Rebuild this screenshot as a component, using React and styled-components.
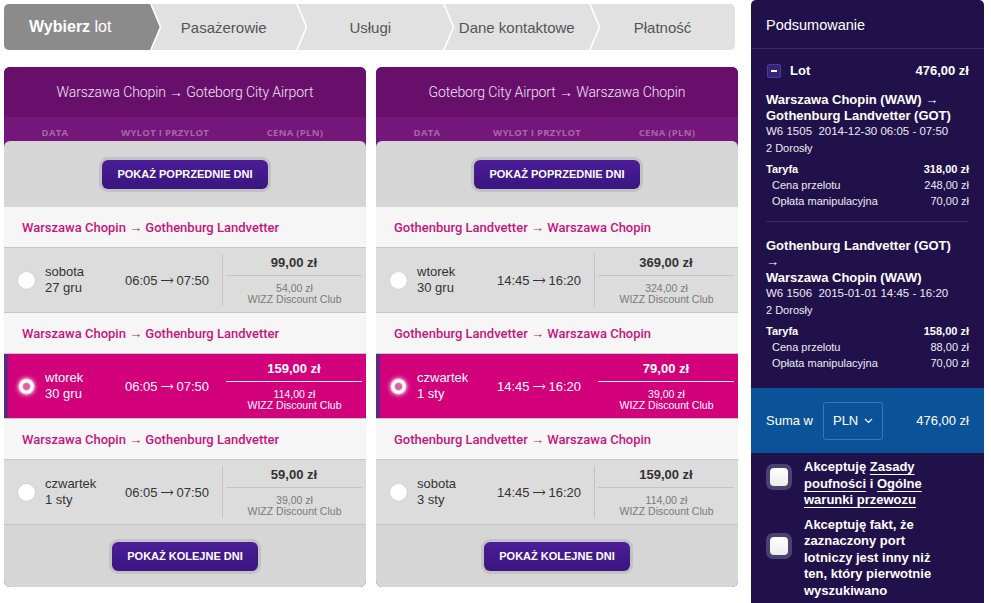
import React from "react"
import styled, { createGlobalStyle } from "styled-components"


const GlobalStyle = createGlobalStyle`
  html, body {
    margin: 0;
    padding: 0;
    background: #fff;
  }
  body {
    font-family: "Liberation Sans", Arial, sans-serif;
    color: #333;
  }
  * {
    box-sizing: border-box;
  }
`

const outbound = {
  title: "Warszawa Chopin → Goteborg City Airport",
  route: "Warszawa Chopin → Gothenburg Landvetter",
  from: "06:05",
  to: "07:50",
  days: [
    { day: "sobota", date: "27 gru", price: "99,00 zł", club: "54,00 zł" },
    { day: "wtorek", date: "30 gru", price: "159,00 zł", club: "114,00 zł", selected: true },
    { day: "czwartek", date: "1 sty", price: "59,00 zł", club: "39,00 zł" },
  ],
}

const inbound = {
  title: "Goteborg City Airport → Warszawa Chopin",
  route: "Gothenburg Landvetter → Warszawa Chopin",
  from: "14:45",
  to: "16:20",
  days: [
    { day: "wtorek", date: "30 gru", price: "369,00 zł", club: "324,00 zł" },
    { day: "czwartek", date: "1 sty", price: "79,00 zł", club: "39,00 zł", selected: true },
    { day: "sobota", date: "3 sty", price: "159,00 zł", club: "114,00 zł" },
  ],
}

const summary = [
  {
    lines: ["Warszawa Chopin (WAW) →", "Gothenburg Landvetter (GOT)"],
    meta: "W6 1505\u00a0 2014-12-30 06:05 - 07:50",
    fare: "318,00 zł",
    base: "248,00 zł",
    fee: "70,00 zł",
  },
  {
    lines: ["Gothenburg Landvetter (GOT)", "→", "Warszawa Chopin (WAW)"],
    meta: "W6 1506\u00a0 2015-01-01 14:45 - 16:20",
    fare: "158,00 zł",
    base: "88,00 zł",
    fee: "70,00 zł",
  },
]


const Page = styled.div`
  display: flex;
  align-items: flex-start;
  height: 603px;
  overflow: hidden;
`

const Main = styled.main`
  width: 738px;
  flex-shrink: 0;
  padding: 4px 0 0 4px;
`

/* ---------- booking steps ---------- */

const Steps = styled.ol`
  display: flex;
  width: 731px;
  height: 46px;
  margin: 0 0 17px;
  padding: 0;
  list-style: none;
  background: #e1e1e1;
  border-radius: 5px;
  overflow: hidden;
`

const Step = styled.li`
  position: relative;
  flex: ${props => props.last ? "1" : "0 0 146.5px"};
  display: flex;
  align-items: center;
  justify-content: center;
  padding-right: ${props => props.active ? "14px" : "0"};
  font-size: ${props => props.active ? "16px" : "15px"};
  color: ${props => props.active ? "#fff" : "#555"};
  background: ${props => props.active ? "#8b8b8b" : "transparent"};

  b {
    font-weight: bold;
  }
`

const ChevronMark = styled.svg`
  position: absolute;
  top: 0;
  right: -11px;
  z-index: 1;
`

const Chevron = ({ fill }) => (
  <ChevronMark width="12" height="46" viewBox="0 0 12 46">
    {fill && <polygon points="0,0 10.5,23 0,46" fill={fill} />}
    <polyline points="0.5,-1 10.5,23 0.5,47" fill="none" stroke="#fff" strokeWidth="1.6" />
  </ChevronMark>
)

/* ---------- flight panels ---------- */

const Panels = styled.div`
  display: flex;
  gap: 10px;
`

const Panel = styled.section`
  width: 362px;
  height: 520px;
  display: flex;
  flex-direction: column;
  background: #74167a;
  border-radius: 6px;
  overflow: hidden;
`

const PanelTitle = styled.h2`
  margin: 0;
  height: 50px;
  display: flex;
  align-items: center;
  justify-content: center;
  background: #680f6c;
  color: #f3e3f3;
  font: 300 14px Roboto, "Open Sans", sans-serif;
  letter-spacing: -0.1px;
`

const ColumnHeads = styled.div`
  display: flex;
  height: 24px;
  padding-top: 9px;
`

const ColumnHead = styled.span`
  width: ${props => props.width}px;
  flex-shrink: 0;
  text-align: center;
  color: #a966ab;
  font: bold 9.5px "Open Sans", "Liberation Sans", sans-serif;
  letter-spacing: 0.3px;
`

const PanelBody = styled.div`
  flex: 1;
  display: flex;
  flex-direction: column;
  background: #d6d6d6;
  border-radius: 6px 6px 0 0;
`

const MoreBar = styled.div`
  height: ${props => props.height}px;
  display: flex;
  align-items: center;
  justify-content: center;
`

const MoreButton = styled.button`
  height: 29px;
  padding: 0 15px;
  border: 0;
  border-radius: 6px;
  background: linear-gradient(#4b1d97, #3a1580);
  box-shadow: 0 0 0 3px #c2c2c2;
  color: #fff;
  font: bold 11px "Liberation Sans", Arial, sans-serif;
  cursor: pointer;
`

const RouteLabel = styled.div`
  height: 40px;
  display: flex;
  align-items: center;
  padding-left: 18px;
  background: #f6f6f6;
  color: #c8137d;
  font: 500 13px Roboto, "Open Sans", sans-serif;
`

const FlightRow = styled.div`
  height: 66px;
  display: flex;
  align-items: center;
  padding-left: 14px;
  background: ${props => props.selected ? "#d3007b" : "#dcdcdc"};
  border-top: 1px solid #c6c6c6;
  border-bottom: 1px solid #c6c6c6;
  box-shadow: ${props => props.selected ? "inset 4px 0 0 #5b2b83" : "none"};
  color: ${props => props.selected ? "#fff" : "#333"};
  font-size: 13px;
`

const Radio = styled.span`
  width: 17px;
  height: 17px;
  flex-shrink: 0;
  margin-right: 10px;
  border-radius: 50%;
  background: ${props => props.checked
    ? "radial-gradient(circle, #d964a4 0 3px, #fff 4.5px 6.5px, rgba(255,255,255,0.5) 8.5px, rgba(255,255,255,0) 9px)"
    : "radial-gradient(circle at 50% 45%, #fff 55%, #ededed 100%)"};
  box-shadow: ${props => props.checked ? "0 0 4px rgba(255,255,255,0.8)" : "0 0 1px rgba(0,0,0,0.25)"};
`

const DayCell = styled.div`
  width: 80px;
  flex-shrink: 0;
  line-height: 16px;
`

const TimeCell = styled.div`
  width: 97px;
  flex-shrink: 0;
  display: flex;
  align-items: center;
  gap: 3px;
  white-space: nowrap;
`

const TimeArrow = styled.svg`
  flex-shrink: 0;
  margin-top: 1px;
`

const PriceCell = styled.div`
  flex: 1;
  align-self: stretch;
  margin: 6px 0;
  border-left: 1px solid ${props => props.selected ? "transparent" : "#c4c4c4"};
  text-align: center;
`

const PriceMain = styled.div`
  height: 22px;
  margin: 0 4px 0 3px;
  line-height: 18px;
  font-weight: bold;
  border-bottom: 1px solid ${props => props.selected ? "#fff" : "#c4c4c4"};
`

const PriceClub = styled.div`
  padding-top: 7px;
  font-size: 10.5px;
  line-height: 11px;
  color: ${props => props.selected ? "#fff" : "#7a7a7a"};
`

/* ---------- summary sidebar ---------- */

const Sidebar = styled.aside`
  width: 233px;
  height: 603px;
  flex-shrink: 0;
  margin-left: 13px;
  background: #20114a;
  border-radius: 5px 5px 0 0;
  color: #fff;
`

const SummaryTitle = styled.h3`
  margin: 0;
  height: 49px;
  padding: 1px 15px 0;
  display: flex;
  align-items: center;
  border-bottom: 1px solid #382b62;
  font-size: 14.5px;
  font-weight: normal;
`

const SummaryBody = styled.div`
  padding: 0 15px;
`

const LineItem = styled.div`
  display: flex;
  align-items: center;
  justify-content: space-between;
  height: 15px;
  margin-top: 14px;
  font-size: 13px;
  font-weight: bold;
`

const LotLabel = styled.span`
  display: flex;
  align-items: center;
  gap: 9px;
`

const Collapse = styled.span`
  position: relative;
  width: 14px;
  height: 14px;
  margin-left: 1px;
  background: #35247a;
  border: 1px solid #4a3b95;
  border-radius: 2px;

  &::before {
    content: "";
    position: absolute;
    left: 3px;
    top: 5px;
    width: 6px;
    height: 2px;
    background: #fff;
  }
`

const FlightBlock = styled.div`
  padding-top: ${props => props.first ? "14px" : "16px"};
  padding-bottom: 12px;
  border-bottom: ${props => props.first ? "1px solid #382b62" : "0"};
`

const FlightName = styled.div`
  font-size: 13px;
  font-weight: bold;
  line-height: 16px;
`

const FlightMeta = styled.div`
  font-size: 11.5px;
  line-height: 14px;
  color: #ecebf3;
`

const Passengers = styled.div`
  margin-top: 3px;
  font-size: 11px;
  line-height: 14px;
  color: #ecebf3;
`

const FareList = styled.div`
  margin-top: 6px;
`

const FareRow = styled.div`
  display: flex;
  justify-content: space-between;
  padding-left: ${props => props.sub ? "6px" : "0"};
  font-size: 11px;
  line-height: 16px;
  font-weight: ${props => props.sub ? "normal" : "bold"};
  color: ${props => props.sub ? "#ecebf3" : "#fff"};
`

const TotalBar = styled.div`
  height: 65px;
  margin-top: 5px;
  padding: 0 15px;
  display: flex;
  align-items: center;
  background: #0b5398;
  font-size: 13px;
`

const CurrencySelect = styled.div`
  display: flex;
  align-items: center;
  gap: 6px;
  height: 38px;
  margin-left: 10px;
  padding: 0 9px;
  border: 1px solid #3c74b4;
  border-radius: 3px;
`

const TotalAmount = styled.span`
  margin-left: auto;
`

const Agreements = styled.div`
  padding: 6px 15px 0;
  display: flex;
  flex-direction: column;
  gap: 8px;
`

const Agreement = styled.label`
  display: flex;
  align-items: flex-start;
  gap: 12px;
  font-size: 13px;
  font-weight: bold;
  line-height: 16.5px;
  white-space: nowrap;

  a {
    color: #fff;
    text-decoration: underline;
    text-underline-offset: 3px;
    text-decoration-thickness: 1px;
  }
`

const Checkbox = styled.span`
  width: 26px;
  height: 26px;
  flex-shrink: 0;
  margin-top: ${props => props.offset}px;
  border-radius: 7px;
  background: #4d4173;
  padding: 4px;

  &::after {
    content: "";
    display: block;
    width: 18px;
    height: 18px;
    border-radius: 4px;
    background: linear-gradient(#fff, #ececec);
  }
`

const Caret = () => (
  <svg width="9" height="6" viewBox="0 0 9 6">
    <polyline points="1,1 4.5,4.5 8,1" fill="none" stroke="#fff" strokeWidth="1.2" />
  </svg>
)

// long thin arrow between departure and arrival times
const LongArrow = () => (
  <TimeArrow width="13" height="7" viewBox="0 0 13 7">
    <path d="M0 3.5h12M9.5 1.2l2.6 2.3-2.6 2.3" fill="none" stroke="currentColor" strokeWidth="1" />
  </TimeArrow>
)


const FlightPanel = ({ data }) => (
  <Panel>
    <PanelTitle>{data.title}</PanelTitle>
    <ColumnHeads>
      <ColumnHead width={102}>DATA</ColumnHead>
      <ColumnHead width={118}>WYLOT I PRZYLOT</ColumnHead>
      <ColumnHead width={142}>CENA (PLN)</ColumnHead>
    </ColumnHeads>
    <PanelBody>
      <MoreBar height={66}>
        <MoreButton>POKAŻ POPRZEDNIE DNI</MoreButton>
      </MoreBar>
      {data.days.map(d => (
        <React.Fragment key={d.date}>
          <RouteLabel>{data.route}</RouteLabel>
          <FlightRow selected={d.selected}>
            <Radio checked={d.selected} />
            <DayCell>{d.day}<br />{d.date}</DayCell>
            <TimeCell>{data.from}<LongArrow />{data.to}</TimeCell>
            <PriceCell selected={d.selected}>
              <PriceMain selected={d.selected}>{d.price}</PriceMain>
              <PriceClub selected={d.selected}>
                {d.club}<br />WIZZ Discount Club
              </PriceClub>
            </PriceCell>
          </FlightRow>
        </React.Fragment>
      ))}
      <MoreBar height={62}>
        <MoreButton>POKAŻ KOLEJNE DNI</MoreButton>
      </MoreBar>
    </PanelBody>
  </Panel>
)


const App = () => (
  <Page>
    <GlobalStyle />
    <Main>
      <Steps>
        <Step active>
          <span><b>Wybierz</b> lot</span>
          <Chevron fill="#8b8b8b" />
        </Step>
        <Step>Pasażerowie<Chevron /></Step>
        <Step>Usługi<Chevron /></Step>
        <Step>Dane kontaktowe<Chevron /></Step>
        <Step last>Płatność</Step>
      </Steps>

      <Panels>
        <FlightPanel data={outbound} />
        <FlightPanel data={inbound} />
      </Panels>
    </Main>

    <Sidebar>
      <SummaryTitle>Podsumowanie</SummaryTitle>
      <SummaryBody>
        <LineItem>
          <LotLabel><Collapse />Lot</LotLabel>
          <span>476,00 zł</span>
        </LineItem>
        {summary.map((f, i) => (
          <FlightBlock key={f.meta} first={i === 0}>
            <FlightName>
              {f.lines.map(l => <div key={l}>{l}</div>)}
            </FlightName>
            <FlightMeta>{f.meta}</FlightMeta>
            <Passengers>2 Dorosły</Passengers>
            <FareList>
              <FareRow><span>Taryfa</span><span>{f.fare}</span></FareRow>
              <FareRow sub><span>Cena przelotu</span><span>{f.base}</span></FareRow>
              <FareRow sub><span>Opłata manipulacyjna</span><span>{f.fee}</span></FareRow>
            </FareList>
          </FlightBlock>
        ))}
      </SummaryBody>

      <TotalBar>
        Suma w
        <CurrencySelect>PLN <Caret /></CurrencySelect>
        <TotalAmount>476,00 zł</TotalAmount>
      </TotalBar>

      <Agreements>
        <Agreement>
          <Checkbox offset={5} />
          <span>
            Akceptuję <a>Zasady</a><br />
            <a>poufności</a> i <a>Ogólne</a><br />
            <a>warunki przewozu</a>
          </span>
        </Agreement>
        <Agreement>
          <Checkbox offset={16} />
          <span>
            Akceptuję fakt, że<br />
            zaznaczony port<br />
            lotniczy jest inny niż<br />
            ten, który pierwotnie<br />
            wyszukiwano
          </span>
        </Agreement>
      </Agreements>
    </Sidebar>
  </Page>
)


export default App
